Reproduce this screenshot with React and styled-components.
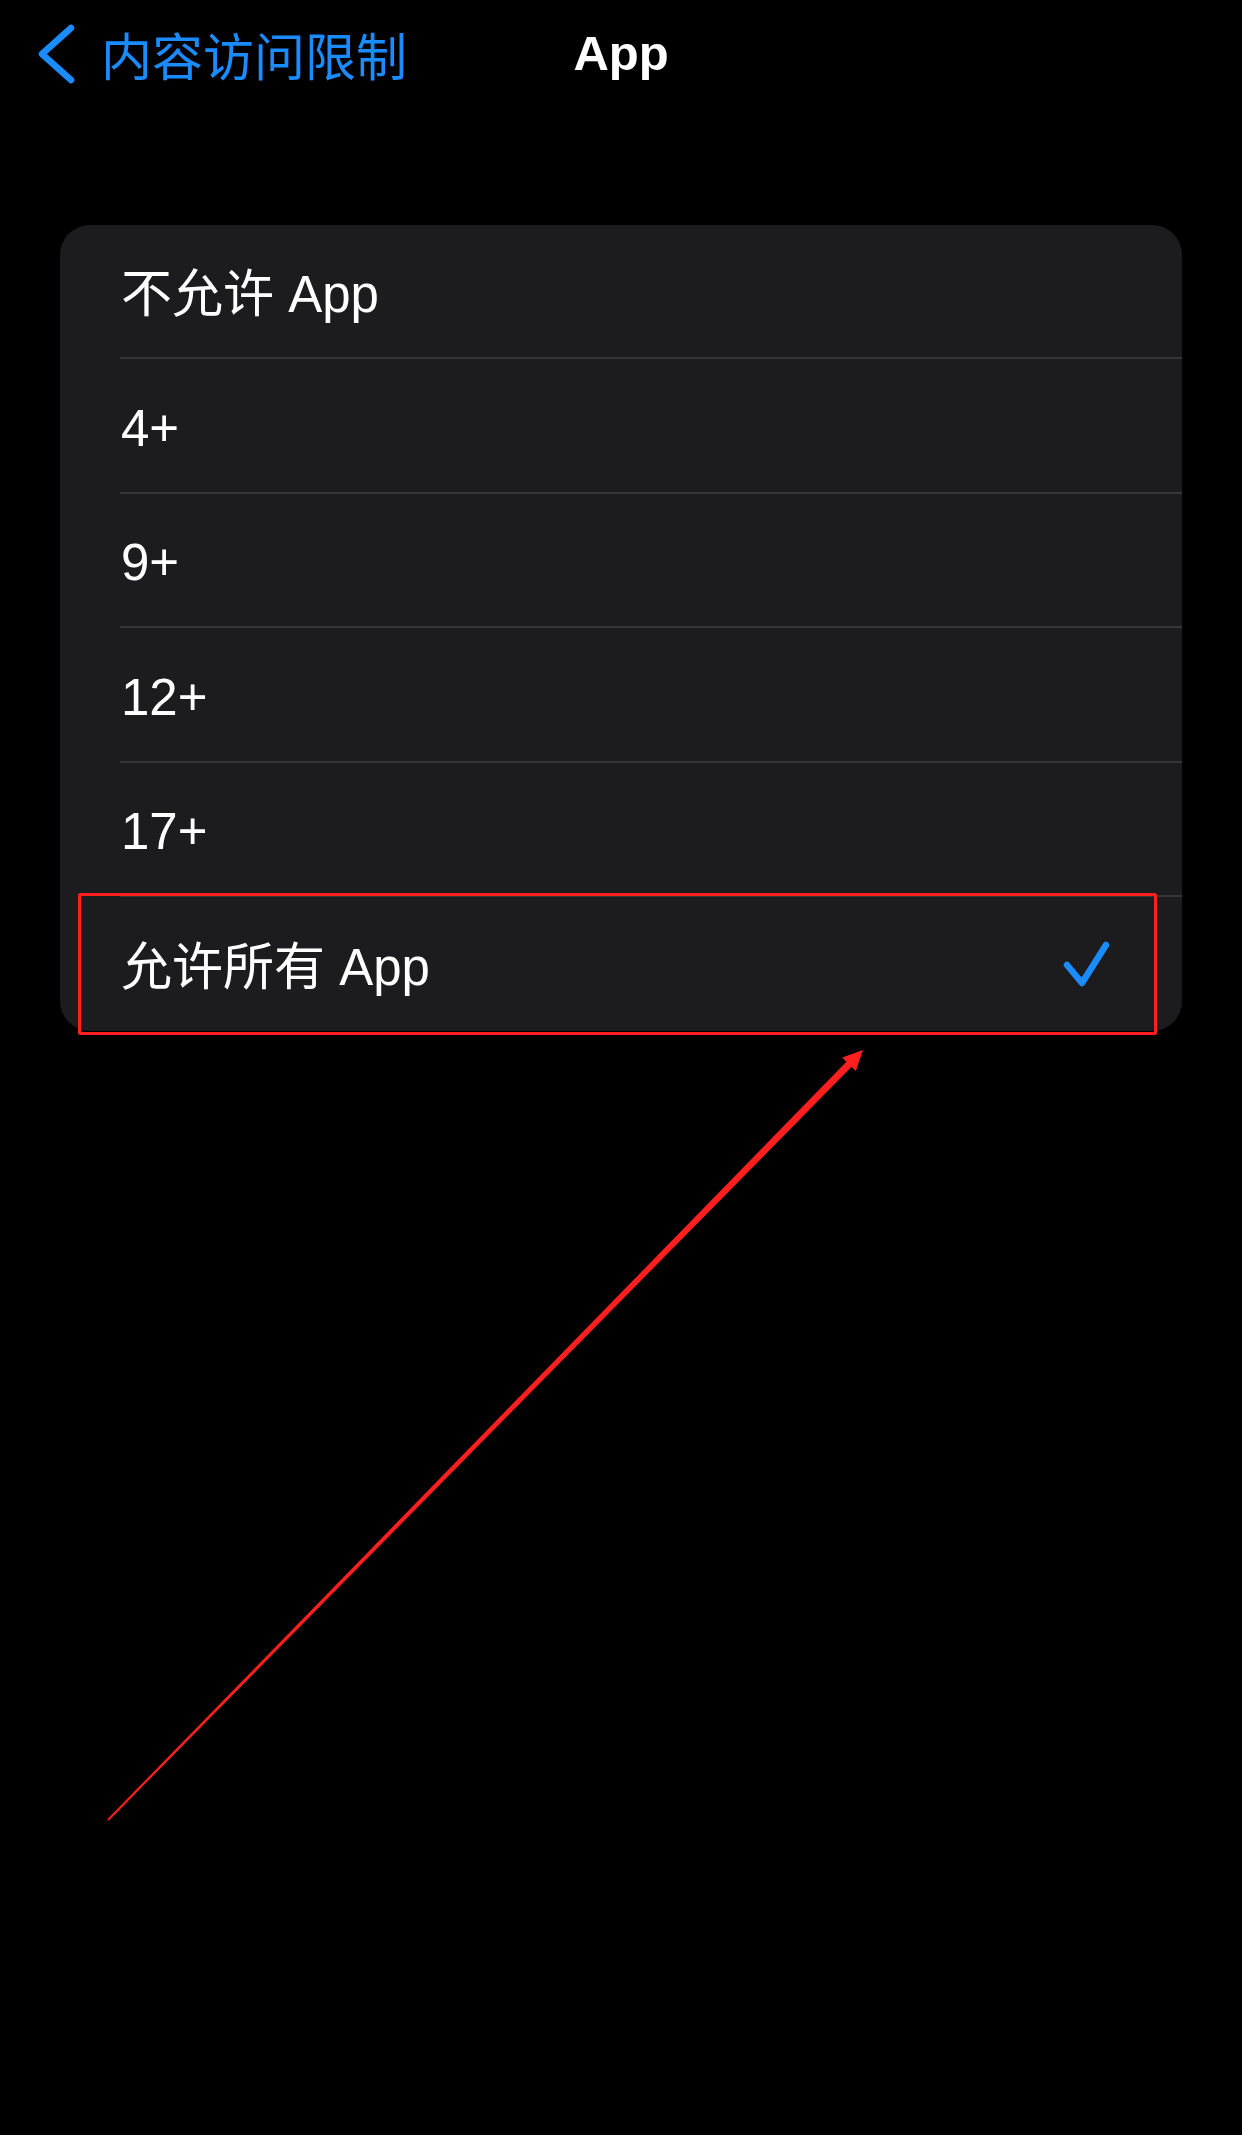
import React from "react";
import styled, { createGlobalStyle } from "styled-components";

const GlobalStyle = createGlobalStyle`
  html, body {
    margin: 0;
    padding: 0;
    background: #000000;
  }
  body {
    font-family: "Liberation Sans", "Noto Sans CJK SC", sans-serif;
    color: #ffffff;
    -webkit-font-smoothing: antialiased;
  }
  * { box-sizing: border-box; }
`;

const Page = styled.div`
  position: relative;
  width: 1242px;
  min-height: 2135px;
  background: #000000;
  overflow: hidden;
`;

const NavBar = styled.header`
  display: grid;
  grid-template-columns: 1fr auto 1fr;
  align-items: center;
  height: 106px;
`;

const BackLink = styled.a`
  display: flex;
  align-items: center;
  gap: 25px;
  margin-left: 36px;
  color: #1a8cff;
  font-size: 51px;
  line-height: 1;
  text-decoration: none;
  font-family: "Noto Sans CJK SC", "Liberation Sans", sans-serif;
  padding-top: 2px;
`;

const Title = styled.h1`
  margin: 0;
  font-size: 49px;
  font-weight: 700;
  line-height: 1;
  color: #ffffff;
  font-family: "Liberation Sans", "Noto Sans CJK SC", sans-serif;
`;

const Card = styled.ul`
  list-style: none;
  margin: 119px 60px 0 60px;
  padding: 0;
  background: #1c1c1e;
  border-radius: 30px;
  overflow: hidden;
`;

const Row = styled.li`
  display: flex;
  padding-left: 60px;
`;

const RowInner = styled.div`
  flex: 1;
  height: 134.4px;
  display: flex;
  align-items: center;
  justify-content: space-between;
  padding: 0 72px 0 1px;
  border-bottom: ${(p) => (p.$last ? "none" : "2px solid #363638")};
`;

const Label = styled.span`
  font-size: 51px;
  line-height: 1;
  padding-top: 6px;
  color: #ffffff;
  font-family: "Liberation Sans", "Noto Sans CJK SC", sans-serif;
`;

const Overlay = styled.svg`
  position: absolute;
  top: 0;
  left: 0;
  width: 1242px;
  height: 2135px;
  pointer-events: none;
`;

const Chevron = () => (
  <svg width="40" height="62" viewBox="0 0 40 62" fill="none">
    <path
      d="M35 5 L6 31 L35 57"
      stroke="#1a8cff"
      strokeWidth="6.5"
      strokeLinecap="round"
      strokeLinejoin="round"
    />
  </svg>
);

const Check = () => (
  <svg width="48" height="48" viewBox="0 0 48 48" fill="none">
    <path
      d="M5 25 L20 43 L44 5"
      stroke="#1a8cff"
      strokeWidth="6.5"
      strokeLinecap="round"
      strokeLinejoin="round"
    />
  </svg>
);

const options = [
  { label: "不允许 App" },
  { label: "4+" },
  { label: "9+" },
  { label: "12+" },
  { label: "17+" },
  { label: "允许所有 App", selected: true },
];

function arrowPolygon() {
  const tail = [108, 1820];
  const tip = [863, 1050];
  const dx = tip[0] - tail[0];
  const dy = tip[1] - tail[1];
  const len = Math.hypot(dx, dy);
  const ux = dx / len;
  const uy = dy / len;
  const px = -uy;
  const py = ux;
  const headLen = 20;
  const base = [tip[0] - ux * headLen, tip[1] - uy * headLen];
  const wTail = 1;
  const wShaft = 3.6;
  const wHead = 9.5;
  const pts = [
    [tail[0] + px * wTail, tail[1] + py * wTail],
    [base[0] + px * wShaft, base[1] + py * wShaft],
    [base[0] + px * wHead, base[1] + py * wHead],
    tip,
    [base[0] - px * wHead, base[1] - py * wHead],
    [base[0] - px * wShaft, base[1] - py * wShaft],
    [tail[0] - px * wTail, tail[1] - py * wTail],
  ];
  return pts.map((p) => `${p[0].toFixed(1)},${p[1].toFixed(1)}`).join(" ");
}

export default function App() {
  return (
    <Page>
      <GlobalStyle />
      <NavBar>
        <BackLink href="#">
          <Chevron />
          <span>内容访问限制</span>
        </BackLink>
        <Title>App</Title>
        <div />
      </NavBar>
      <Card>
        {options.map((o, i) => (
          <Row key={o.label}>
            <RowInner $last={i === options.length - 1}>
              <Label>{o.label}</Label>
              {o.selected && <Check />}
            </RowInner>
          </Row>
        ))}
      </Card>
      <Overlay viewBox="0 0 1242 2135">
        <rect
          x="79.5"
          y="894.5"
          width="1076"
          height="139"
          fill="none"
          stroke="#ff1f1f"
          strokeWidth="3"
          rx="1"
        />
        <polygon points={arrowPolygon()} fill="#ff1f1f" />
      </Overlay>
    </Page>
  );
}
